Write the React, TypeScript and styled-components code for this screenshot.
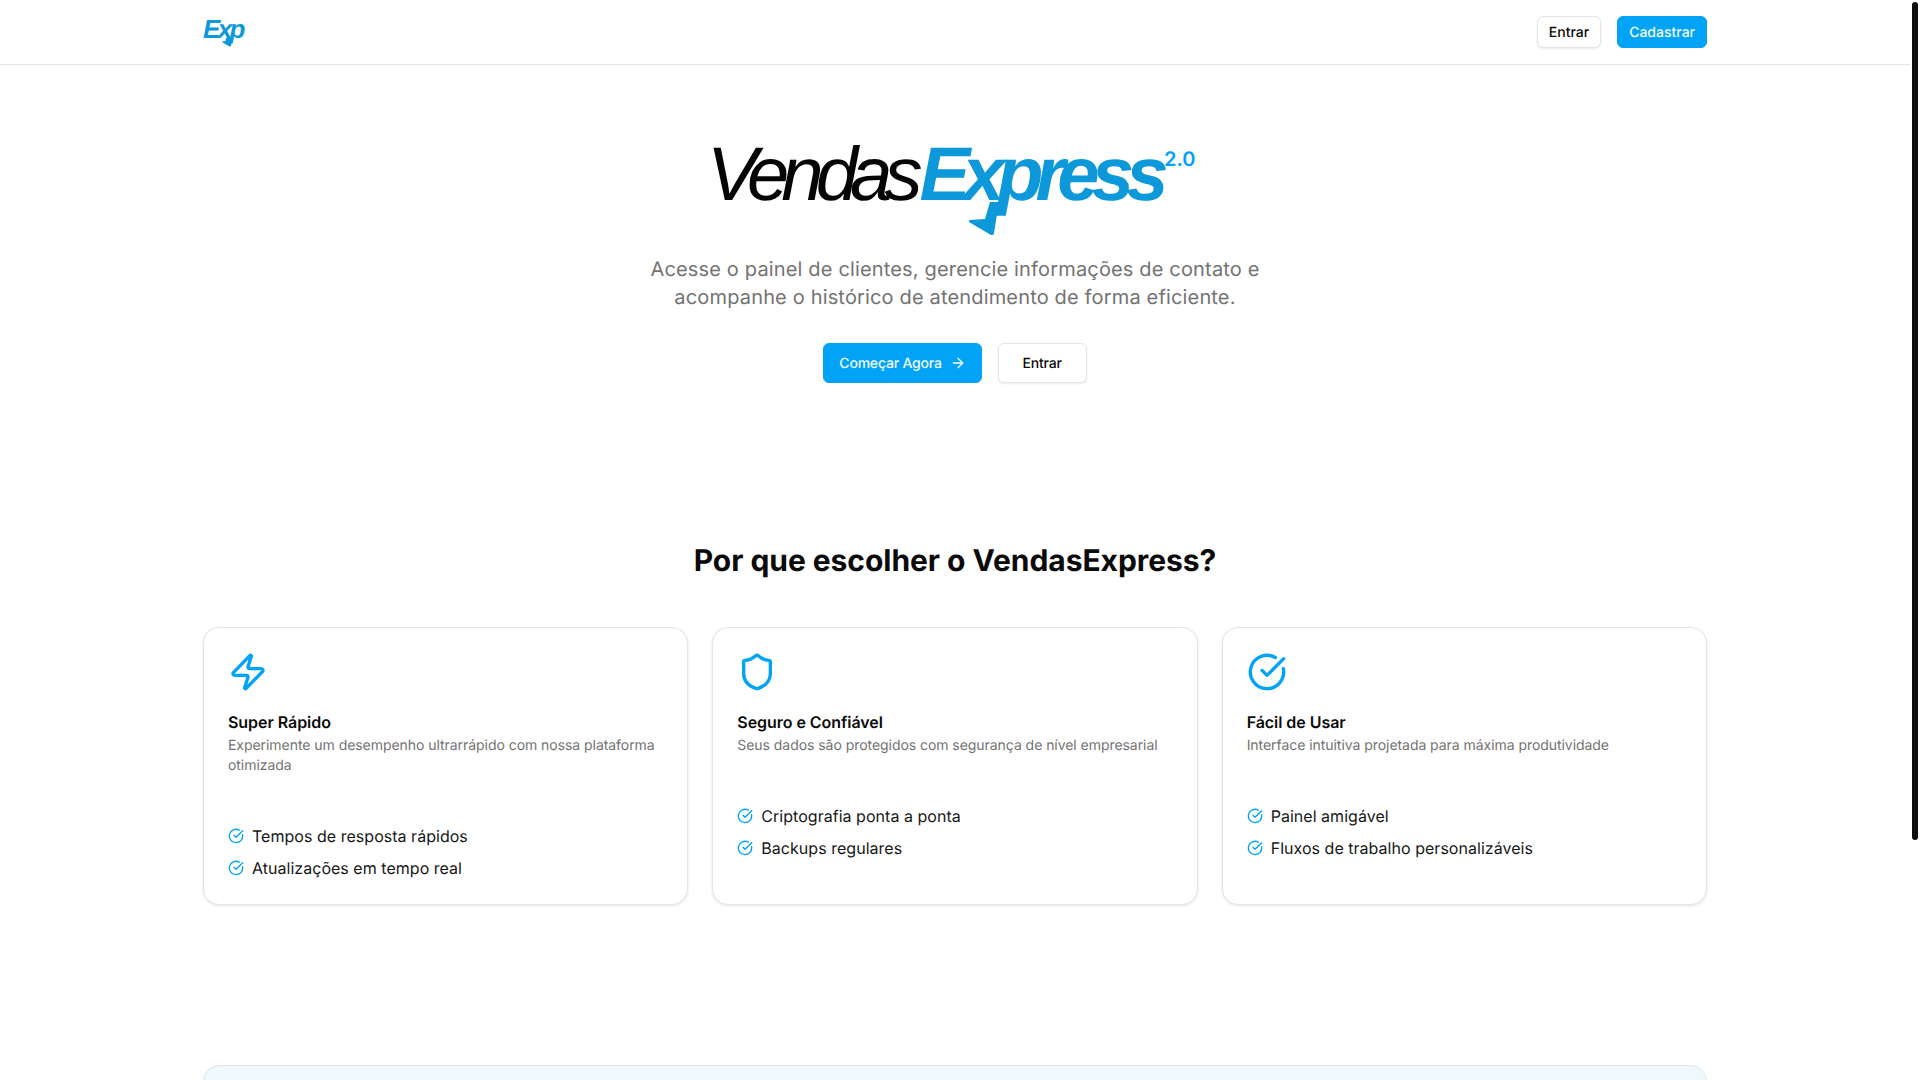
import React from 'react';
import styled, { createGlobalStyle } from 'styled-components';
import { ArrowRight, CircleCheckBig, Shield, Zap } from 'lucide-react';

const GlobalStyle = createGlobalStyle`
  html, body {
    margin: 0;
    padding: 0;
    background: #ffffff;
    color: #0a0a0a;
    font-family: 'Inter', 'Liberation Sans', sans-serif;
    text-rendering: geometricPrecision;
  }
  body {
    padding-right: 10px;
  }
  * {
    box-sizing: border-box;
  }
`;

const PRIMARY = '#00a3f5';
const LOGO_BLUE = '#0d98da';

const ScrollThumb = styled.div`
  position: fixed;
  top: 2px;
  right: 2px;
  width: 6px;
  height: 838px;
  border-radius: 3px;
  background: #0f0f0f;
`;

const Header = styled.header`
  height: 65px;
  border-bottom: 1px solid #e5e5e5;
`;

const Container = styled.div`
  max-width: 1536px;
  margin: 0 auto;
  padding: 0 16px;
`;

const HeaderInner = styled(Container)`
  height: 64px;
  display: flex;
  align-items: center;
  justify-content: space-between;
`;

const SmallLogo = styled.div`
  position: relative;
  width: 41px;
  height: 32px;
  margin-top: -4px;
  font-family: 'Liberation Sans', Arial, sans-serif;
  font-style: italic;
  font-weight: 700;
  font-size: 26px;
  line-height: 30px;
  letter-spacing: -2.7px;
  color: ${LOGO_BLUE};
`;

const SmallTail = styled.svg`
  position: absolute;
  left: 19px;
  top: 24px;
  width: 14px;
  height: 16px;
`;

const HeaderActions = styled.div`
  display: flex;
  gap: 16px;
`;

const Button = styled.button<{ $primary?: boolean; $large?: boolean }>`
  display: inline-flex;
  align-items: center;
  justify-content: center;
  gap: 8px;
  height: ${(p) => (p.$large ? '40px' : '32px')};
  padding: 0 ${(p) => (p.$large ? '15px' : '11px')};
  border-radius: 6px;
  font-family: inherit;
  font-size: 14px;
  font-weight: 500;
  letter-spacing: ${(p) => (p.$large ? '-0.2px' : '0')};
  white-space: nowrap;
  border: 1px solid ${(p) => (p.$primary ? PRIMARY : '#e5e5e5')};
  background: ${(p) => (p.$primary ? PRIMARY : '#ffffff')};
  color: ${(p) => (p.$primary ? '#f4fbff' : '#0a0a0a')};
  box-shadow: ${(p) => (p.$primary ? 'none' : '0 1px 2px rgba(0, 0, 0, 0.08)')};
  text-rendering: geometricPrecision;
`;

const WideButton = styled(Button)`
  width: 89px;
`;

const Hero = styled.section`
  display: flex;
  flex-direction: column;
  align-items: center;
  padding-top: 64px;
`;

const HeroLogo = styled.div`
  position: relative;
  width: 490px;
  height: 110px;
  text-indent: -3px;
  font-family: 'Liberation Sans', Arial, sans-serif;
  font-style: italic;
  font-size: 76px;
  line-height: 92px;
  white-space: nowrap;
  color: #050505;
`;

const Vendas = styled.span`
  letter-spacing: -7.9px;
`;

const Express = styled.span`
  margin-left: 5px;
  font-weight: 700;
  letter-spacing: -7.8px;
  color: ${LOGO_BLUE};
`;

const Version = styled.span`
  position: absolute;
  left: 454px;
  top: 16px;
  font-family: 'Inter', sans-serif;
  font-style: normal;
  font-weight: 600;
  font-size: 20px;
  line-height: 28px;
  letter-spacing: 0;
  text-indent: 0;
  color: ${PRIMARY};
`;

const HeroTail = styled.svg`
  position: absolute;
  left: 248px;
  top: 73px;
  width: 60px;
  height: 46px;
`;

const Subtitle = styled.p`
  width: 672px;
  margin: 16px 0 32px;
  text-align: center;
  font-size: 20px;
  line-height: 28px;
  letter-spacing: 0.16px;
  color: #737373;
`;

const HeroActions = styled.div`
  display: flex;
  gap: 16px;
`;

const Features = styled.section`
  padding-top: 160px;
`;

const SectionTitle = styled.h2`
  margin: 0 0 48px;
  text-align: center;
  font-size: 30px;
  line-height: 36px;
  font-weight: 700;
  letter-spacing: -0.05px;
`;

const CardGrid = styled.div`
  display: grid;
  grid-template-columns: repeat(3, 1fr);
  gap: 24px;
`;

const Card = styled.article`
  display: flex;
  flex-direction: column;
  padding: 24px;
  border: 1px solid #e5e5e5;
  border-radius: 16px;
  background: #ffffff;
  box-shadow: 0 1px 3px rgba(0, 0, 0, 0.1);
`;

const CardIcon = styled.div`
  height: 40px;
  margin-bottom: 18px;
  color: ${PRIMARY};
`;

const CardTitle = styled.h3`
  margin: 0 0 2px;
  font-size: 16px;
  line-height: 24px;
  font-weight: 600;
  letter-spacing: -0.05px;
`;

const CardText = styled.p`
  margin: 0;
  font-size: 14px;
  line-height: 20px;
  letter-spacing: -0.05px;
  color: #737373;
`;

const FeatureList = styled.ul`
  list-style: none;
  margin: 48px 0 0;
  padding: 0;
  display: flex;
  flex-direction: column;
  gap: 8px;
`;

const FeatureItem = styled.li`
  display: flex;
  align-items: center;
  gap: 8px;
  font-size: 16px;
  line-height: 24px;
  letter-spacing: 0.03px;
  color: #171717;
  svg {
    color: ${PRIMARY};
    flex-shrink: 0;
  }
`;

const CtaPanel = styled.section`
  height: 260px;
  margin: 160px 0 65px;
  border: 1px solid #e5e5e5;
  border-radius: 16px;
  background: #eff8fd;
`;

const cards = [
  {
    icon: Zap,
    title: 'Super Rápido',
    text: 'Experimente um desempenho ultrarrápido com nossa plataforma otimizada',
    items: ['Tempos de resposta rápidos', 'Atualizações em tempo real'],
  },
  {
    icon: Shield,
    title: 'Seguro e Confiável',
    text: 'Seus dados são protegidos com segurança de nível empresarial',
    items: ['Criptografia ponta a ponta', 'Backups regulares'],
  },
  {
    icon: CircleCheckBig,
    title: 'Fácil de Usar',
    text: 'Interface intuitiva projetada para máxima produtividade',
    items: ['Painel amigável', 'Fluxos de trabalho personalizáveis'],
  },
];

export default function App() {
  return (
    <>
      <GlobalStyle />
      <ScrollThumb />
      <Header>
        <HeaderInner>
          <SmallLogo>
            Exp
            <SmallTail viewBox="0 0 14 16">
              <path d="M4 0 L3.5 3 L0.5 3.5 L0.5 4.5 L7.5 8.5 L9 8 L10.5 0 Z" fill={LOGO_BLUE} />
            </SmallTail>
          </SmallLogo>
          <HeaderActions>
            <Button>Entrar</Button>
            <Button $primary>Cadastrar</Button>
          </HeaderActions>
        </HeaderInner>
      </Header>
      <Container>
        <Hero>
          <HeroLogo>
            <Vendas>Vendas</Vendas>
            <Express>Express</Express>
            <Version>2.0</Version>
            <HeroTail viewBox="0 0 60 46">
              <path d="M32 0 L27 17 L12 18 Q10 19 11 20 L33 33 Q36 33 36 31 L41 0 Z" fill={LOGO_BLUE} />
            </HeroTail>
          </HeroLogo>
          <Subtitle>
            Acesse o painel de clientes, gerencie informações de contato e acompanhe o histórico de
            atendimento de forma eficiente.
          </Subtitle>
          <HeroActions>
            <Button $primary $large>
              Começar Agora
              <ArrowRight size={16} />
            </Button>
            <WideButton $large>Entrar</WideButton>
          </HeroActions>
        </Hero>
        <Features>
          <SectionTitle>Por que escolher o VendasExpress?</SectionTitle>
          <CardGrid>
            {cards.map((card) => (
              <Card key={card.title}>
                <CardIcon>
                  <card.icon size={40} strokeWidth={2} />
                </CardIcon>
                <CardTitle>{card.title}</CardTitle>
                <CardText>{card.text}</CardText>
                <FeatureList>
                  {card.items.map((item) => (
                    <FeatureItem key={item}>
                      <CircleCheckBig size={16} />
                      {item}
                    </FeatureItem>
                  ))}
                </FeatureList>
              </Card>
            ))}
          </CardGrid>
        </Features>
        <CtaPanel />
      </Container>
    </>
  );
}
